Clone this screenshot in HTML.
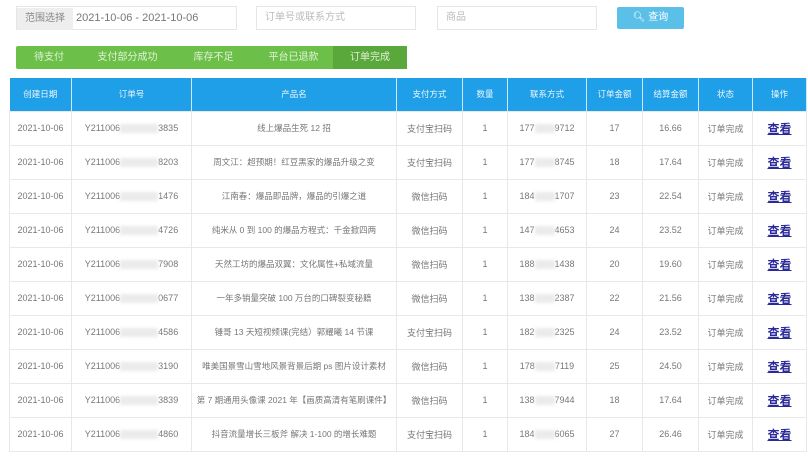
<!DOCTYPE html>
<html><head><meta charset="utf-8"><style>
*{margin:0;padding:0;box-sizing:border-box}
body{width:808px;height:462px;background:#fff;font-family:"Liberation Sans","Noto Sans CJK SC",sans-serif;position:relative;overflow:hidden;color:#777}
.box{position:absolute;border:1px solid #e6e6e6;background:#fff;font-size:10px;color:#bbb;line-height:22px;padding-left:8px}
.tabs{position:absolute;left:16px;top:46px;width:391px;height:23px;background:#6cc04a;border-radius:2px;display:flex;font-size:10px;color:#e0f2d6;line-height:23px}
.tabs div{text-align:center}
table{position:absolute;left:9px;top:78px;width:797px;border-collapse:collapse;font-size:9px;table-layout:fixed}
th{background:#1e9fe8;color:#eef7fd;font-weight:normal;height:33px;border-right:1px solid #cfe8f8;font-size:8.5px}
td{height:34px;text-align:center;border:1px solid #e8e8e8;color:#777;white-space:nowrap;overflow:hidden}
td:nth-child(3){font-size:8.5px}
.b{display:inline-block;width:38px;height:9px;background:#ebebeb;vertical-align:middle;filter:blur(1.5px)}
.p{display:inline-block;width:20px;height:9px;background:#ebebeb;vertical-align:middle;filter:blur(1.5px)}
a{color:#2a2a9a;font-weight:bold;font-size:12px;text-decoration:underline}
</style></head><body>
<div class="box" style="left:16px;top:6px;width:221px;height:24px;padding-left:0;color:#777;font-size:11px"><span style="display:inline-block;width:56px;background:#eee;text-align:center;font-size:10px;color:#888">范围选择</span> 2021-10-06 - 2021-10-06</div>
<div class="box" style="left:256px;top:6px;width:160px;height:24px">订单号或联系方式</div>
<div class="box" style="left:437px;top:6px;width:160px;height:24px">商品</div>
<div style="position:absolute;left:617px;top:7px;width:67px;height:22px;background:#5bc0e8;border-radius:2px;color:#fff;font-size:10px;line-height:22px;text-align:center">&#x1F50D;&#xFE0E; 查询</div>
<div class="tabs"><div style="width:66px">待支付</div><div style="width:91px">支付部分成功</div><div style="width:81px">库存不足</div><div style="width:79px">平台已退款</div><div style="width:74px;background:#5aa83c">订单完成</div></div>
<table>
<colgroup><col style="width:62px"><col style="width:120px"><col style="width:205px"><col style="width:66px"><col style="width:45px"><col style="width:79px"><col style="width:56px"><col style="width:56px"><col style="width:54px"><col style="width:54px"></colgroup>
<tr><th>创建日期</th><th>订单号</th><th>产品名</th><th>支付方式</th><th>数量</th><th>联系方式</th><th>订单金额</th><th>结算金额</th><th>状态</th><th>操作</th></tr>
<tr><td>2021-10-06</td><td>Y211006<span class="b"></span>3835</td><td>线上爆品生死 12 招</td><td>支付宝扫码</td><td>1</td><td>177<span class="p"></span>9712</td><td>17</td><td>16.66</td><td>订单完成</td><td><a>查看</a></td></tr>
<tr><td>2021-10-06</td><td>Y211006<span class="b"></span>8203</td><td>周文江：超预期！红豆黑家的爆品升级之变</td><td>支付宝扫码</td><td>1</td><td>177<span class="p"></span>8745</td><td>18</td><td>17.64</td><td>订单完成</td><td><a>查看</a></td></tr>
<tr><td>2021-10-06</td><td>Y211006<span class="b"></span>1476</td><td>江南春：爆品即品牌，爆品的引爆之道</td><td>微信扫码</td><td>1</td><td>184<span class="p"></span>1707</td><td>23</td><td>22.54</td><td>订单完成</td><td><a>查看</a></td></tr>
<tr><td>2021-10-06</td><td>Y211006<span class="b"></span>4726</td><td>纯米从 0 到 100 的爆品方程式：千金掀四两</td><td>微信扫码</td><td>1</td><td>147<span class="p"></span>4653</td><td>24</td><td>23.52</td><td>订单完成</td><td><a>查看</a></td></tr>
<tr><td>2021-10-06</td><td>Y211006<span class="b"></span>7908</td><td>天然工坊的爆品双翼：文化属性+私域流量</td><td>微信扫码</td><td>1</td><td>188<span class="p"></span>1438</td><td>20</td><td>19.60</td><td>订单完成</td><td><a>查看</a></td></tr>
<tr><td>2021-10-06</td><td>Y211006<span class="b"></span>0677</td><td>一年多销量突破 100 万台的口碑裂变秘籍</td><td>微信扫码</td><td>1</td><td>138<span class="p"></span>2387</td><td>22</td><td>21.56</td><td>订单完成</td><td><a>查看</a></td></tr>
<tr><td>2021-10-06</td><td>Y211006<span class="b"></span>4586</td><td>锤哥 13 天短视频课(完结）郭耀曦 14 节课</td><td>支付宝扫码</td><td>1</td><td>182<span class="p"></span>2325</td><td>24</td><td>23.52</td><td>订单完成</td><td><a>查看</a></td></tr>
<tr><td>2021-10-06</td><td>Y211006<span class="b"></span>3190</td><td>唯美国景雪山雪地风景背景后期 ps 图片设计素材</td><td>微信扫码</td><td>1</td><td>178<span class="p"></span>7119</td><td>25</td><td>24.50</td><td>订单完成</td><td><a>查看</a></td></tr>
<tr><td>2021-10-06</td><td>Y211006<span class="b"></span>3839</td><td>第 7 期通用头像课 2021 年【画质高清有笔刷课件】</td><td>微信扫码</td><td>1</td><td>138<span class="p"></span>7944</td><td>18</td><td>17.64</td><td>订单完成</td><td><a>查看</a></td></tr>
<tr><td>2021-10-06</td><td>Y211006<span class="b"></span>4860</td><td>抖音流量增长三板斧 解决 1-100 的增长难题</td><td>支付宝扫码</td><td>1</td><td>184<span class="p"></span>6065</td><td>27</td><td>26.46</td><td>订单完成</td><td><a>查看</a></td></tr>
</table>
</body></html>
